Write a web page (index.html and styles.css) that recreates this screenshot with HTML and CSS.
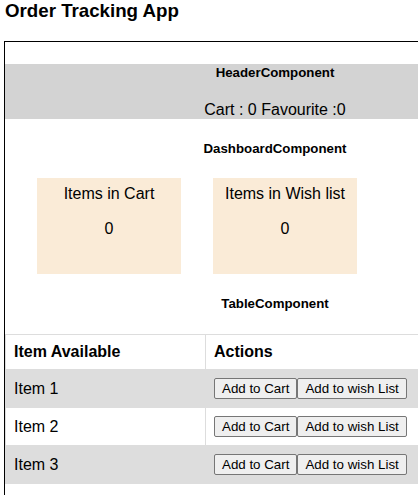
FILE: index.html
```html
<!DOCTYPE html>
<html>
<head>
<meta charset="utf-8">
<link rel="stylesheet" href="styles.css">
</head>
<body>
<h1 class="title">Order Tracking App</h1>
<div class="app">
  <div class="header">
    <div class="label">HeaderComponent</div>
    <div class="counts">Cart : 0 Favourite :0</div>
  </div>
  <div class="label section-label">DashboardComponent</div>
  <div class="cards">
    <div class="card">
      <div class="card-title">Items in Cart</div>
      <div class="card-value">0</div>
    </div>
    <div class="card">
      <div class="card-title">Items in Wish list</div>
      <div class="card-value">0</div>
    </div>
  </div>
  <div class="label section-label table-label">TableComponent</div>
  <table class="items">
    <colgroup><col class="col-item"><col></colgroup>
    <tr><th>Item Available</th><th>Actions</th></tr>
    <tr><td>Item 1</td><td><button class="btn">Add to Cart</button><button class="btn">Add to wish List</button></td></tr>
    <tr><td>Item 2</td><td><button class="btn">Add to Cart</button><button class="btn">Add to wish List</button></td></tr>
    <tr><td>Item 3</td><td><button class="btn">Add to Cart</button><button class="btn">Add to wish List</button></td></tr>
  </table>
</div>
</body>
</html>
```
FILE: styles.css
```css
html {
  overflow: hidden;
}
body {
  margin: 0 0 0 4px;
  font-family: "Liberation Sans", Arial, sans-serif;
  color: #000;
  background: #fff;
}
.title {
  margin: 0 0 0 1px;
  font-size: 18.72px;
  font-weight: bold;
  line-height: 22px;
}
.app {
  margin-top: 19px;
  width: 540px;
  border: 1px solid #000;
  padding-top: 22px;
  padding-bottom: 20px;
}
.header {
  background: #d3d3d3;
  text-align: center;
  padding-top: 1px;
}
.label {
  font-size: 13.28px;
  font-weight: bold;
  line-height: 15px;
  text-align: center;
}
.counts {
  margin-top: 21px;
  font-size: 16px;
  line-height: 18px;
}
.section-label {
  margin-top: 22px;
}
.cards {
  display: flex;
  gap: 32px;
  padding-left: 32px;
  margin-top: 22px;
}
.card {
  width: 144px;
  height: 96px;
  box-sizing: border-box;
  background: #faebd7;
  text-align: center;
  padding-top: 7px;
  font-size: 16px;
  line-height: 18px;
}
.card-value {
  margin-top: 17px;
}
.table-label {
  margin-top: 22px;
}
.items {
  margin-top: 23px;
  width: 100%;
  border-collapse: collapse;
  table-layout: fixed;
  font-size: 16px;
}
.col-item {
  width: 200px;
}
.items th,
.items td {
  border: 1px solid #dddddd;
  text-align: left;
  padding: 8px;
  line-height: 18px;
}
.items th {
  font-weight: bold;
}
.items tr:nth-child(even) {
  background: #dddddd;
}
.btn {
  font-family: "Liberation Sans", Arial, sans-serif;
  font-size: 13.33px;
  height: 21px;
  padding: 1px 7px;
  margin: 0;
  border: 1px solid #767676;
  border-radius: 2px;
  background: #efefef;
  color: #000;
  vertical-align: middle;
}
```
